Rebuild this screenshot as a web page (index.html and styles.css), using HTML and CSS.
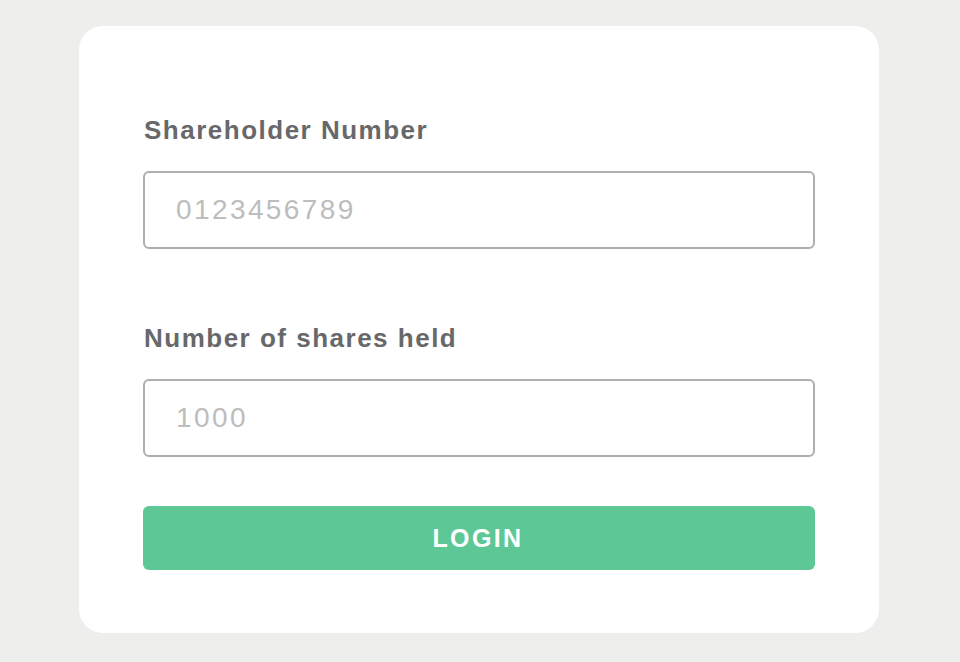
FILE: index.html
```html
<!DOCTYPE html>
<html>
<head>
<meta charset="utf-8">
<link rel="stylesheet" href="styles.css">
</head>
<body>
<div class="page">
  <form class="card">
    <div class="field">
      <label class="label">Shareholder Number</label>
      <input class="input" type="text" placeholder="0123456789">
    </div>
    <div class="field">
      <label class="label">Number of shares held</label>
      <input class="input" type="text" placeholder="1000">
    </div>
    <button class="button" type="button">LOGIN</button>
  </form>
</div>
</body>
</html>
```

FILE: styles.css
```css
html, body {
  margin: 0;
  padding: 0;
  background: #eeefed;
  font-family: "Liberation Sans", Arial, sans-serif;
}
.page {
  width: 960px;
  height: 662px;
  padding-top: 26px;
  box-sizing: border-box;
}
.card {
  width: 800px;
  height: 607px;
  margin-left: 79px;
  box-sizing: border-box;
  background: #ffffff;
  border-radius: 24px;
  padding: 89px 64px 0 64px;
  display: flex;
  flex-direction: column;
}
.field {
  display: flex;
  flex-direction: column;
}
.field + .field {
  margin-top: 74px;
}
.label {
  font-size: 26px;
  font-weight: bold;
  color: #68686b;
  line-height: 30px;
  letter-spacing: 1.5px;
  padding-left: 1px;
}
.input {
  margin-top: 26px;
  height: 78px;
  box-sizing: border-box;
  border: 2px solid #aeaeb0;
  border-radius: 6px;
  padding: 0 0 0 31px;
  font-family: "Liberation Sans", Arial, sans-serif;
  font-size: 28px;
  letter-spacing: 2.4px;
  color: #444;
  outline: none;
}
.input::placeholder {
  color: #bdbdbd;
}
.button {
  margin-top: 49px;
  height: 64px;
  border: none;
  border-radius: 6px;
  background: #5dc896;
  color: #ffffff;
  font-family: "Liberation Sans", Arial, sans-serif;
  font-size: 25px;
  font-weight: bold;
  letter-spacing: 2.4px;
  padding-left: 4px;
}
```
